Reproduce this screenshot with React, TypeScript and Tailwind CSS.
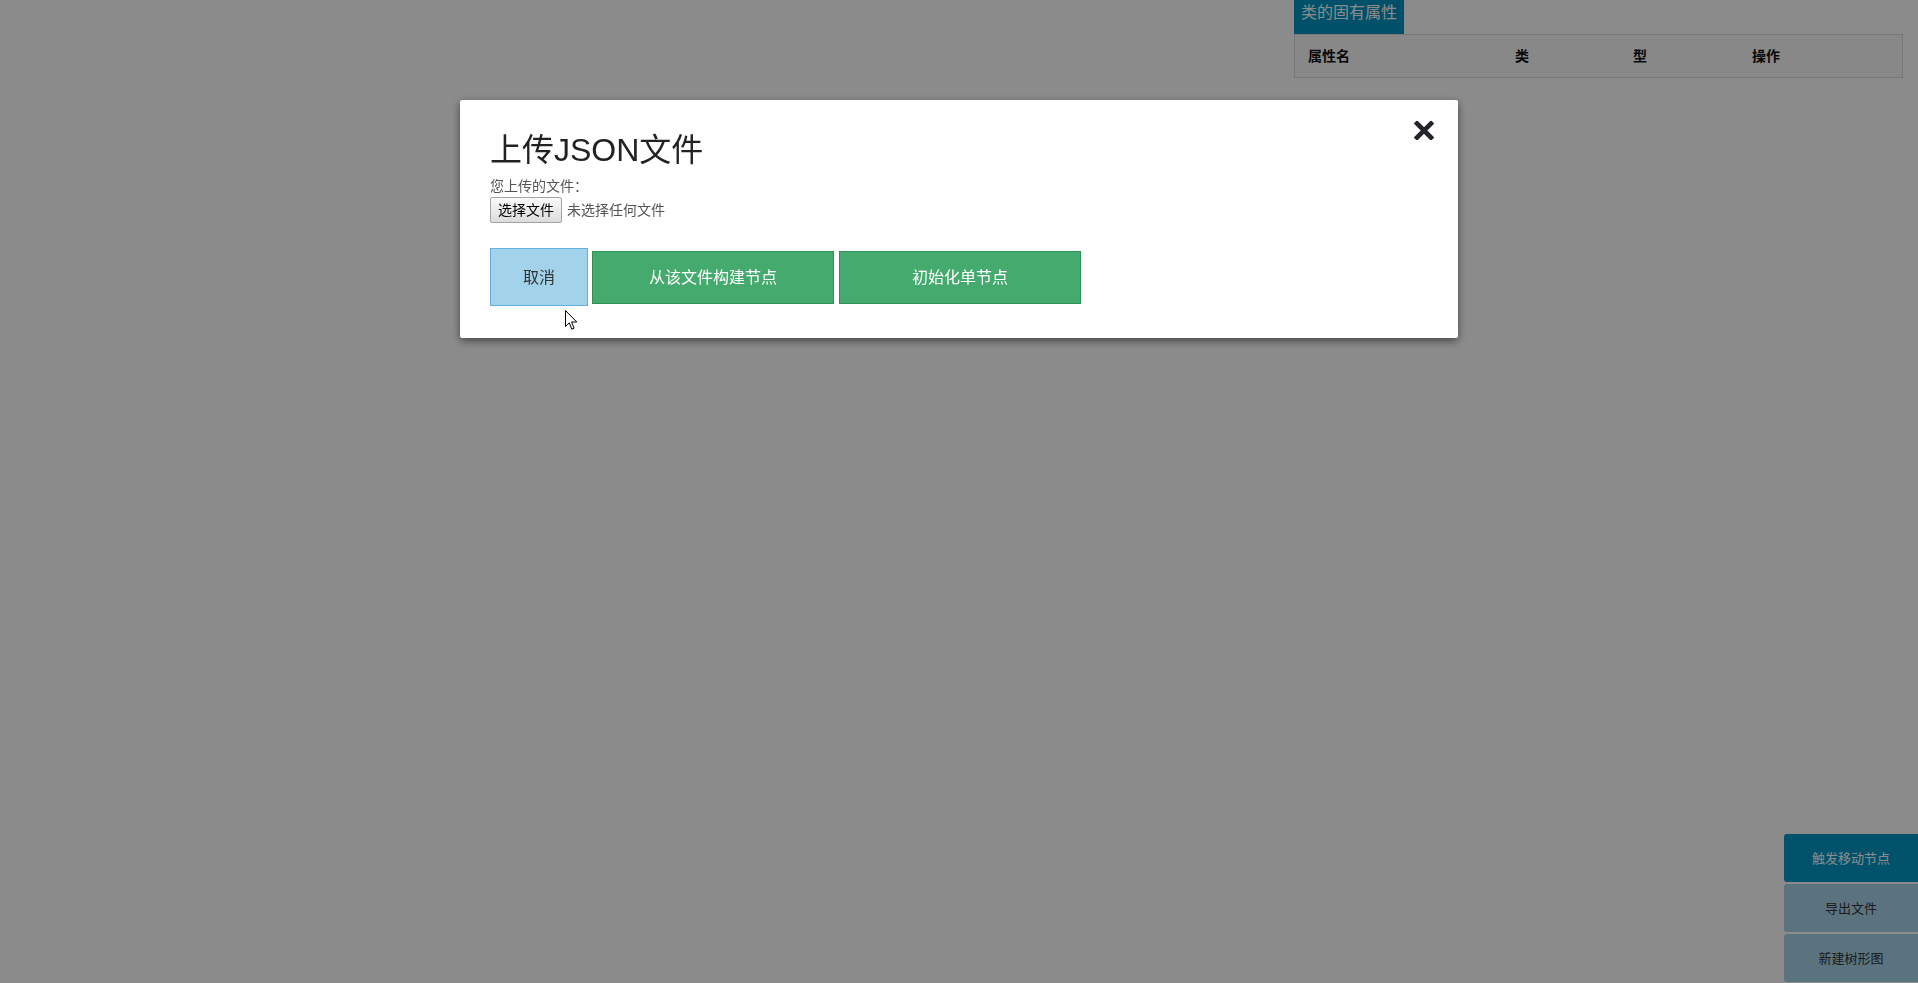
import React from "react";

const font = "font-['Liberation_Sans','Noto_Sans_CJK_SC',sans-serif]";

const columns = [
  { label: "属性名" },
  { label: "类" },
  { label: "型" },
  { label: "操作" },
];

const sideActions = [
  { label: "触发移动节点", tone: "bg-[#0098c5] text-white" },
  { label: "导出文件", tone: "bg-[#a6d3ea] text-[#333]" },
  { label: "新建树形图", tone: "bg-[#a6d3ea] text-[#333]" },
];

const CloseIcon = () => (
  <svg width="20" height="19" viewBox="0 0 20 19" aria-hidden="true">
    <path
      d="M3 2.5 L17 16.5 M17 2.5 L3 16.5"
      stroke="#212529"
      strokeWidth="4.6"
      strokeLinecap="square"
    />
  </svg>
);

const Cursor = () => (
  <svg width="13" height="21" viewBox="0 0 13 21" aria-hidden="true">
    <path
      d="M0.5 0.5 L0.5 16.5 L4.3 12.8 L6.8 19.2 L9.1 18.2 L6.6 12 L11.8 12 Z"
      fill="#fff"
      stroke="#000"
      strokeWidth="1"
      strokeLinejoin="round"
    />
  </svg>
);

const UploadModal = () => (
  <div className="fixed inset-0 bg-black/[0.455]">
    <div className="mx-auto mt-[100px] w-[998px] rounded-[2px] bg-white pl-[30px] pr-[24px] pt-[31px] pb-[32px] shadow-[0_3px_9px_rgba(0,0,0,0.5)]">
      <div className="flex items-start justify-between">
        <h2 className="text-[32px] leading-[38px] font-normal text-[#222]">
          上传JSON文件
        </h2>
        <button className="-mt-[10px]">
          <CloseIcon />
        </button>
      </div>
      <div className="mt-[7px] text-[14px] leading-[20px] text-[#555]">
        您上传的文件：
      </div>
      <div className="mt-px flex items-center text-[14px]">
        <span className="flex h-[26px] w-[72px] items-center justify-center rounded-[2px] border border-[#a3a3a3] bg-gradient-to-b from-[#fafafa] to-[#dcdcdc] text-[14px] text-black">
          选择文件
        </span>
        <span className="ml-[5px] text-[#555]">未选择任何文件</span>
      </div>
      <div className="mt-[25px] flex items-center text-[16px]">
        <button className="h-[58px] w-[98px] border border-[#61b1dc] bg-[#a3d3ea] pt-[2px] text-[#333]">
          取消
        </button>
        <button className="ml-[4px] h-[53px] w-[242px] border border-[#2f8f56] bg-[#45aa6d] pt-[2px] text-white">
          从该文件构建节点
        </button>
        <button className="ml-[5px] h-[53px] w-[242px] border border-[#2f8f56] bg-[#45aa6d] pt-[2px] text-white">
          初始化单节点
        </button>
      </div>
    </div>
    <div className="absolute left-[565px] top-[310px]">
      <Cursor />
    </div>
  </div>
);

export default function App() {
  return (
    <div className={`relative flex h-[983px] w-full flex-col overflow-hidden bg-white ${font}`}>
      <div className="flex justify-end pr-[15px]">
        <div className="w-[609px]">
          <div className="inline-flex h-[34px] items-start bg-[#0094c1] px-[7px] pt-[1px] text-[16px] leading-[24px] text-white">
            类的固有属性
          </div>
          <div className="grid h-[44px] grid-cols-[207px_118px_119px_1fr] items-center border border-[#dadada] bg-[#f9f9f9] pl-[13px] pt-px text-[14px] font-bold text-[#111]">
            {columns.map((c) => (
              <span key={c.label}>{c.label}</span>
            ))}
          </div>
        </div>
      </div>

      <div className="mt-auto flex flex-col items-end gap-[2px] pb-px">
        {sideActions.map((a) => (
          <button
            key={a.label}
            className={`flex h-[48px] w-[134px] items-center justify-center rounded-l-[3px] pt-[2px] text-[13px] ${a.tone}`}
          >
            {a.label}
          </button>
        ))}
      </div>

      <UploadModal />
    </div>
  );
}
